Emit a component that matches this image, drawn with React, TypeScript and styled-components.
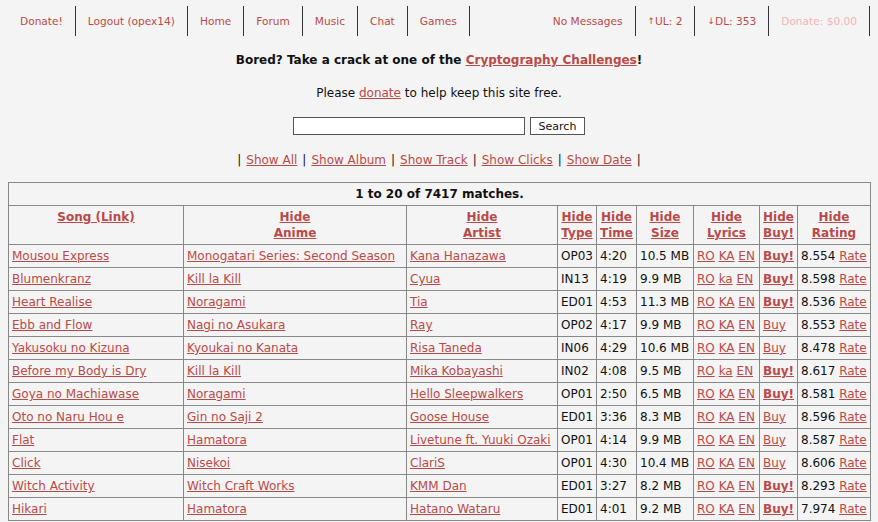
import styled, { createGlobalStyle } from "styled-components";

const GlobalStyle = createGlobalStyle`
  html, body {
    margin: 0;
    padding: 0;
    background: #f4f4f4;
    font-family: "DejaVu Sans", Verdana, sans-serif;
    font-size: 12px;
    color: #111;
  }
`;

const Page = styled.div`
  padding: 0 8px;
`;

const Nav = styled.nav`
  display: flex;
  justify-content: space-between;
  padding-top: 6px;
`;

const NavGroup = styled.div`
  display: flex;
`;

const NavItem = styled.a<{ $faded?: boolean }>`
  display: flex;
  align-items: center;
  height: 30px;
  padding: 0 12px;
  border-right: 1px solid #333;
  font-size: 10.6px;
  color: ${(p) => (p.$faded ? "#f2b5b3" : "#b94a48")};
  text-decoration: none;
  white-space: nowrap;
`;

const Arrow = styled.span`
  font-size: 9px;
`;

const Link = styled.a<{ $bold?: boolean }>`
  color: #b94a48;
  text-decoration: underline;
  font-weight: ${(p) => (p.$bold ? 700 : "inherit")};
`;

const Headline = styled.p`
  margin: 16px 0 0;
  text-align: center;
  font-weight: 700;
  line-height: 16px;
`;

const Line = styled.p`
  margin: 17px 0 0;
  text-align: center;
  line-height: 16px;
`;

const SearchForm = styled.form`
  display: flex;
  justify-content: center;
  gap: 5px;
  margin-top: 16px;
`;

const SearchInput = styled.input`
  width: 228px;
  height: 14px;
  border: 1px solid #555;
  background: #fff;
  padding: 1px;
`;

const SearchButton = styled.button`
  height: 18px;
  padding: 0 8px;
  border: 1px solid #555;
  background: #fff;
  font-family: "DejaVu Sans", Verdana, sans-serif;
  font-size: 11px;
  color: #111;
`;

const Filters = styled.p`
  margin: 17px 0 0;
  text-align: center;
  line-height: 16px;
`;

const Bar = styled.span`
  margin: 0 5px;
`;

const Table = styled.table`
  margin-top: 14px;
  width: 862px;
  border-collapse: collapse;
  table-layout: fixed;
  border: 1px solid #777;
`;

const Caption = styled.th`
  border: 1px solid #888;
  padding: 3px 4px;
  height: 15px;
  line-height: 16px;
  font-weight: 700;
  text-align: center;
`;

const Head = styled.th`
  border: 1px solid #888;
  padding: 3px 0;
  line-height: 16px;
  vertical-align: top;
  text-align: center;
  white-space: nowrap;
`;

const Cell = styled.td`
  border: 1px solid #888;
  padding: 3px 3px;
  line-height: 16px;
  white-space: nowrap;
  overflow: hidden;
`;

type Row = {
  song: string;
  anime: string;
  artist: string;
  type: string;
  time: string;
  size: string;
  ka: string;
  buy: boolean;
  rating: string;
};

const rows: Row[] = [
  { song: "Mousou Express", anime: "Monogatari Series: Second Season", artist: "Kana Hanazawa", type: "OP03", time: "4:20", size: "10.5 MB", ka: "KA", buy: true, rating: "8.554" },
  { song: "Blumenkranz", anime: "Kill la Kill", artist: "Cyua", type: "IN13", time: "4:19", size: "9.9 MB", ka: "ka", buy: true, rating: "8.598" },
  { song: "Heart Realise", anime: "Noragami", artist: "Tia", type: "ED01", time: "4:53", size: "11.3 MB", ka: "KA", buy: true, rating: "8.536" },
  { song: "Ebb and Flow", anime: "Nagi no Asukara", artist: "Ray", type: "OP02", time: "4:17", size: "9.9 MB", ka: "KA", buy: false, rating: "8.553" },
  { song: "Yakusoku no Kizuna", anime: "Kyoukai no Kanata", artist: "Risa Taneda", type: "IN06", time: "4:29", size: "10.6 MB", ka: "KA", buy: false, rating: "8.478" },
  { song: "Before my Body is Dry", anime: "Kill la Kill", artist: "Mika Kobayashi", type: "IN02", time: "4:08", size: "9.5 MB", ka: "ka", buy: true, rating: "8.617" },
  { song: "Goya no Machiawase", anime: "Noragami", artist: "Hello Sleepwalkers", type: "OP01", time: "2:50", size: "6.5 MB", ka: "KA", buy: true, rating: "8.581" },
  { song: "Oto no Naru Hou e", anime: "Gin no Saji 2", artist: "Goose House", type: "ED01", time: "3:36", size: "8.3 MB", ka: "KA", buy: false, rating: "8.596" },
  { song: "Flat", anime: "Hamatora", artist: "Livetune ft. Yuuki Ozaki", type: "OP01", time: "4:14", size: "9.9 MB", ka: "KA", buy: false, rating: "8.587" },
  { song: "Click", anime: "Nisekoi", artist: "ClariS", type: "OP01", time: "4:30", size: "10.4 MB", ka: "KA", buy: false, rating: "8.606" },
  { song: "Witch Activity", anime: "Witch Craft Works", artist: "KMM Dan", type: "ED01", time: "3:27", size: "8.2 MB", ka: "KA", buy: true, rating: "8.293" },
  { song: "Hikari", anime: "Hamatora", artist: "Hatano Wataru", type: "ED01", time: "4:01", size: "9.2 MB", ka: "KA", buy: true, rating: "7.974" },
];

const widths = [175, 223, 151, 39, 40, 57, 66, 38, 73];
const hides = ["Anime", "Artist", "Type", "Time", "Size", "Lyrics", "Buy!", "Rating"];

export default function App() {
  return (
    <Page>
      <GlobalStyle />
      <Nav>
        <NavGroup>
          <NavItem>Donate!</NavItem>
          <NavItem>Logout (opex14)</NavItem>
          <NavItem>Home</NavItem>
          <NavItem>Forum</NavItem>
          <NavItem>Music</NavItem>
          <NavItem>Chat</NavItem>
          <NavItem>Games</NavItem>
        </NavGroup>
        <NavGroup>
          <NavItem>No Messages</NavItem>
          <NavItem><Arrow>↑</Arrow>UL: 2</NavItem>
          <NavItem><Arrow>↓</Arrow>DL: 353</NavItem>
          <NavItem $faded>Donate: $0.00</NavItem>
        </NavGroup>
      </Nav>

      <Headline>
        Bored? Take a crack at one of the <Link>Cryptography Challenges</Link>!
      </Headline>
      <Line>
        Please <Link>donate</Link> to help keep this site free.
      </Line>
      <SearchForm onSubmit={(e) => e.preventDefault()}>
        <SearchInput type="text" />
        <SearchButton type="submit">Search</SearchButton>
      </SearchForm>
      <Filters>
        |<Bar><Link>Show All</Link></Bar>|<Bar><Link>Show Album</Link></Bar>|
        <Bar><Link>Show Track</Link></Bar>|<Bar><Link>Show Clicks</Link></Bar>|
        <Bar><Link>Show Date</Link></Bar>|
      </Filters>

      <Table>
        <colgroup>
          {widths.map((w, i) => (
            <col key={i} style={{ width: w }} />
          ))}
        </colgroup>
        <thead>
          <tr>
            <Caption colSpan={9}>1 to 20 of 7417 matches.</Caption>
          </tr>
          <tr>
            <Head>
              <Link $bold>Song (Link)</Link>
            </Head>
            {hides.map((h) => (
              <Head key={h}>
                <Link $bold>Hide</Link>
                <br />
                <Link $bold>{h}</Link>
              </Head>
            ))}
          </tr>
        </thead>
        <tbody>
          {rows.map((r) => (
            <tr key={r.song}>
              <Cell><Link>{r.song}</Link></Cell>
              <Cell><Link>{r.anime}</Link></Cell>
              <Cell><Link>{r.artist}</Link></Cell>
              <Cell>{r.type}</Cell>
              <Cell>{r.time}</Cell>
              <Cell>{r.size}</Cell>
              <Cell>
                <Link>RO</Link> <Link>{r.ka}</Link> <Link>EN</Link>
              </Cell>
              <Cell>
                <Link $bold={r.buy}>{r.buy ? "Buy!" : "Buy"}</Link>
              </Cell>
              <Cell>
                {r.rating} <Link>Rate</Link>
              </Cell>
            </tr>
          ))}
        </tbody>
      </Table>
    </Page>
  );
}
